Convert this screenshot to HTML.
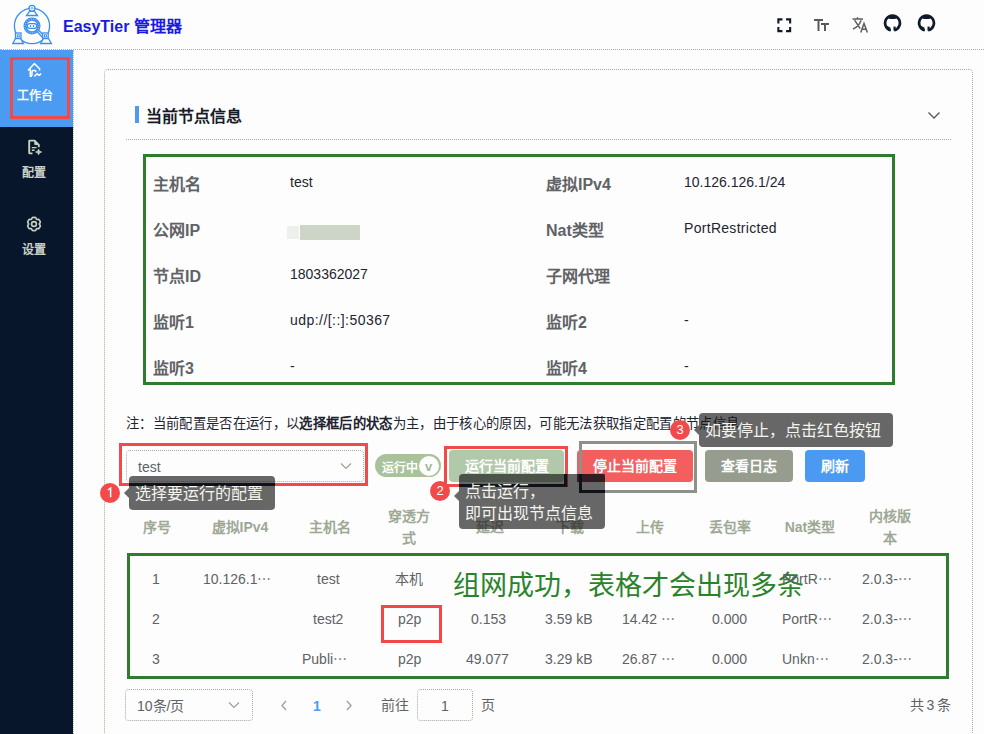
<!DOCTYPE html>
<html lang="zh-CN"><head><meta charset="utf-8">
<style>
*{margin:0;padding:0;box-sizing:border-box}
html,body{width:984px;height:734px;overflow:hidden;background:#fdfdfd;font-family:"Liberation Sans",sans-serif;color:#606266}
.a{position:absolute;white-space:nowrap}
.t14{font-size:14px;line-height:16px}
.t16{font-size:16px;line-height:18px}
.b{font-weight:bold}
.lbl{font-size:16px;line-height:20px;font-weight:bold;color:#606266}
.val{font-size:14px;line-height:16px;color:#1f2430}
.td{font-size:14px;line-height:16px;color:#606266}
.th{font-size:14px;line-height:22px;font-weight:bold;color:#9ea895;text-align:center}
.tip{position:absolute;background:rgba(18,18,18,.64);color:#f4f4ee;font-size:16px;line-height:22px;border-radius:4px;white-space:nowrap}
.tip:before{content:"";position:absolute;left:-5px;top:50%;margin-top:-5px;border-right:5px solid rgba(18,18,18,.64);border-top:5px solid transparent;border-bottom:5px solid transparent}
.t2:before{top:17px;margin-top:0}
.badge{position:absolute;width:20px;height:20px;border-radius:50%;background:#f24a4a;color:#fff;font-size:13px;line-height:20px;text-align:center}
.btn{position:absolute;height:32px;border-radius:4px;color:#fff;font-size:14px;font-weight:bold;line-height:32px;text-align:center}
.dl{position:absolute;border:1px dotted #a5ad9c}
</style></head>
<body>
<!-- header -->
<div class="a" style="left:0;top:0;width:984px;height:49px;background:#fdfdfd"></div>
<div class="a" style="left:0;top:49px;width:984px;height:0;border-top:1px dotted #aab2a2"></div>
<svg class="a" style="left:8px;top:0" width="50" height="48" viewBox="0 0 50 48" fill="none" stroke="#3c8ff0" stroke-width="1.3">
  <circle cx="24" cy="26" r="17.6"/>
  <circle cx="24" cy="26" r="6.9" stroke-width="3.2"/>
  <circle cx="24" cy="26" r="6.9" stroke="#fdfdfd" stroke-width="0.8" stroke-dasharray="0.8 1.6"/>
  <rect x="19.3" y="23.6" width="9.4" height="4.8" rx="2.4"/>
  <path d="M22.5 25v2M25.5 25v2" stroke-width="1.1"/>
  <path d="M29 31.5L35 38M30.8 30.2L36.6 36.6"/>
  <circle cx="24" cy="8.3" r="3" fill="#fdfdfd"/>
  <path d="M23 8.3L24 7.3L25 8.3L24 9.3Z" stroke-width="0.9"/>
  <path d="M18.5 15.5H29.5L26.5 11.3H21.5Z" fill="#fdfdfd"/>
  <rect x="7.5" y="33" width="5.5" height="5.5" fill="#fdfdfd"/>
  <rect x="9.3" y="34.8" width="2" height="2" stroke-width="0.9"/>
  <rect x="34.7" y="33" width="5.5" height="5.5" fill="#fdfdfd"/>
  <rect x="36.5" y="34.8" width="2" height="2" stroke-width="0.9"/>
  <path d="M4.8 43.5H15.4L12.6 38.5H7.6Z" fill="#fdfdfd"/>
  <path d="M32.6 43.5H43.4L40.4 38.5H35.4Z" fill="#fdfdfd"/>
</svg>
<div class="a b" style="left:63px;top:17px;font-size:16px;line-height:20px;color:#1a1ae4">EasyTier 管理器</div>
<!-- top right icons -->
<svg class="a" style="left:777px;top:18px" width="14.5" height="14.5" viewBox="0 0 16 16" fill="none" stroke="#101828" stroke-width="2.3">
  <path d="M1.5 6V1.5H6M10 1.5H14.5V6M14.5 10V14.5H10M6 14.5H1.5V10"/>
</svg>
<svg class="a" style="left:813px;top:18px" width="17" height="14" viewBox="0 0 17 14" fill="none" stroke="#5a5a5a" stroke-width="2">
  <path d="M1 2H10M5.5 2V13M8 6H16M12 6V13"/>
</svg>
<svg class="a" style="left:851px;top:16px" width="18" height="18" viewBox="0 0 18 18" fill="none" stroke="#5e5e5e" stroke-width="1.5">
  <path d="M1.5 3H12M6.5 1.2V3M3.6 4.2L9.2 12.6M10.2 4.2C8.5 8.5 5.5 11.5 2 13M9.8 16.4L13 7.4L16.4 16.4M11 13.2H15"/>
</svg>
<svg class="a" style="left:883px;top:13px" width="19" height="19" viewBox="0 0 19 19" fill="none" stroke="#0f1a2a" stroke-width="2.7"><path d="M11.2 17.2A7.4 7.4 0 1 0 7.8 17.2"/><path d="M6.2 4.6H12.8" stroke-width="2.8"/><path d="M11.6 13.6V17.6" stroke-width="2.2"/><path d="M4 13.6L7.4 15.4M4.6 15.6L7.4 17" stroke-width="1.2"/></svg>
<svg class="a" style="left:917px;top:13px" width="19" height="19" viewBox="0 0 19 19" fill="none" stroke="#0f1a2a" stroke-width="2.7"><path d="M11.2 17.2A7.4 7.4 0 1 0 7.8 17.2"/><path d="M6.2 4.6H12.8" stroke-width="2.8"/><path d="M11.6 13.6V17.6" stroke-width="2.2"/><path d="M4 13.6L7.4 15.4M4.6 15.6L7.4 17" stroke-width="1.2"/></svg>

<!-- sidebar -->
<div class="a" style="left:0;top:50px;width:73px;height:684px;background:#08162b"></div>
<div class="a" style="left:73px;top:50px;width:1px;height:684px;border-left:1px dotted #b8c0b0"></div>
<div class="a" style="left:0;top:50px;width:73px;height:77px;background:#4b9bf2"></div>
<div class="a" style="left:10px;top:57px;width:60px;height:62px;border:3px solid #f04a4a"></div>
<svg class="a" style="left:20px;top:56px" width="30" height="26" viewBox="0 0 30 26" fill="none" stroke="#fff" stroke-width="1.5" stroke-linejoin="round">
  <path d="M8 14.6L14.4 7.6L19.6 12.8V14.4M10.3 12.6V20.2H12M12 19.8V15.4Q12 14.6 12.9 14.6H15Q15.8 14.6 15.8 15.6V16.2M14.3 20.4L17.2 17.8L19.1 19.3L21.2 17.6"/>
</svg>
<div class="a" style="left:17px;top:89px;font-size:12px;line-height:15px;font-weight:600;color:#fafaf4">工作台</div>
<svg class="a" style="left:22px;top:134px" width="26" height="26" viewBox="0 0 26 26" fill="none" stroke="#c8d2c0" stroke-width="1.9" stroke-linejoin="round">
  <path d="M10.5 19.4H7.8Q7.2 19.4 7.2 18.8V7Q7.2 6.6 7.8 6.6H12.6L16.8 10.8V13.2"/>
  <path d="M12.8 7V10.6H16.4Z" fill="#c8d2c0" stroke-width="1"/>
  <path d="M9.8 13.6H14.6M9.8 16.2H12.6" stroke-width="1.4"/>
  <path d="M16.6 15.2Q16.9 17.7 19.6 18Q16.9 18.3 16.6 20.8Q16.3 18.3 13.6 18Q16.3 17.7 16.6 15.2Z" fill="#c8d2c0" stroke-width="0.8"/>
</svg>
<div class="a" style="left:22px;top:166px;font-size:12px;line-height:15px;font-weight:600;color:#c8d0c4">配置</div>
<svg class="a" style="left:21px;top:212px" width="26" height="26" viewBox="0 0 26 26" fill="none" stroke="#c8d2c0" stroke-width="1.6" stroke-linejoin="round">
  <path d="M13.00 5.30 L14.71 5.62 L15.60 7.50 L17.67 7.33 L18.80 8.65 L19.38 10.29 L18.20 12.00 L19.38 13.71 L18.80 15.35 L17.67 16.67 L15.60 16.50 L14.71 18.38 L13.00 18.70 L11.29 18.38 L10.40 16.50 L8.33 16.67 L7.20 15.35 L6.62 13.71 L7.80 12.00 L6.62 10.29 L7.20 8.65 L8.33 7.33 L10.40 7.50 L11.29 5.62Z"/>
  <circle cx="13" cy="12" r="2.4"/>
</svg>
<div class="a" style="left:22px;top:243px;font-size:12px;line-height:15px;font-weight:600;color:#c8d0c4">设置</div>

<!-- card -->
<div class="dl" style="left:104px;top:69px;width:869px;height:700px;border-radius:4px"></div>
<div class="a" style="left:135px;top:106px;width:4px;height:17px;background:#4b9bf2"></div>
<div class="a b" style="left:146px;top:107px;font-size:16px;line-height:20px;color:#151b28">当前节点信息</div>
<svg class="a" style="left:927px;top:110px" width="14" height="10" viewBox="0 0 14 10" fill="none" stroke="#505850" stroke-width="1.3"><path d="M1.5 2.5L7 8L12.5 2.5"/></svg>
<div class="a" style="left:126px;top:139px;width:825px;height:0;border-top:1px dotted #a5ad9c"></div>

<!-- green box info -->
<div class="a" style="left:143px;top:154px;width:752px;height:231px;border:3px solid #2e7d2e"></div>
<div class="a lbl" style="left:153px;top:175px">主机名</div>
<div class="a lbl" style="left:153px;top:221px">公网IP</div>
<div class="a lbl" style="left:153px;top:267px">节点ID</div>
<div class="a lbl" style="left:153px;top:313px">监听1</div>
<div class="a lbl" style="left:153px;top:359px">监听3</div>
<div class="a lbl" style="left:546px;top:175px">虚拟IPv4</div>
<div class="a lbl" style="left:546px;top:221px">Nat类型</div>
<div class="a lbl" style="left:546px;top:267px">子网代理</div>
<div class="a lbl" style="left:546px;top:313px">监听2</div>
<div class="a lbl" style="left:546px;top:359px">监听4</div>
<div class="a val" style="left:290px;top:174px">test</div>
<div class="a" style="left:300px;top:225px;width:60px;height:15px;background:#cdd5c8"></div>
<div class="a" style="left:287px;top:226px;width:12px;height:13px;background:#eef0eb"></div>
<div class="a val" style="left:290px;top:266px">1803362027</div>
<div class="a val" style="left:290px;top:312px;letter-spacing:0.45px">udp://[::]:50367</div>
<div class="a val" style="left:290px;top:358px">-</div>
<div class="a val" style="left:684px;top:174px">10.126.126.1/24</div>
<div class="a val" style="left:684px;top:220px;letter-spacing:0.3px">PortRestricted</div>
<div class="a val" style="left:684px;top:312px">-</div>
<div class="a val" style="left:684px;top:358px">-</div>

<!-- note -->
<div class="a" style="left:126px;top:416px;font-size:13.34px;letter-spacing:0.33px;line-height:16px;color:#1f2430">注：当前配置是否在运行，以<b>选择框后的状态</b>为主，由于核心的原因，可能无法获取指定配置的节点信息</div>

<!-- controls -->
<div class="dl" style="left:126px;top:450px;width:238px;height:32px;border-radius:4px"></div>
<div class="a t14" style="left:138px;top:459px;color:#606266">test</div>
<svg class="a" style="left:340px;top:462px" width="12" height="8" viewBox="0 0 12 8" fill="none" stroke="#9aa292" stroke-width="1.2"><path d="M1 1.5L6 6.5L11 1.5"/></svg>
<div class="a" style="left:119px;top:443px;width:249px;height:43px;border:3px solid #f04a4a"></div>

<div class="a" style="left:375px;top:454px;width:66px;height:23px;border-radius:12px;background:#a9c29b"></div>
<div class="a" style="left:382px;top:461px;font-size:12px;line-height:15px;font-weight:600;color:#fff">运行中</div>
<div class="a" style="left:419px;top:456px;width:20px;height:20px;border-radius:50%;background:#fdfdfd"></div>
<div class="a" style="left:425px;top:459px;font-size:13px;line-height:15px;color:#a4b898;font-weight:bold">v</div>

<div class="btn" style="left:449px;top:450px;width:115px;background:#b2c8aa">运行当前配置</div>
<div class="a" style="left:444px;top:446px;width:124px;height:41px;border:3px solid #f04a4a"></div>

<div class="btn" style="left:577px;top:450px;width:116px;background:#f35f5f">停止当前配置</div>
<div class="a" style="left:579px;top:441px;width:118px;height:52px;border:3px solid #8e908a"></div>

<div class="btn" style="left:705px;top:450px;width:88px;background:#969d8e">查看日志</div>
<div class="btn" style="left:805px;top:450px;width:60px;background:#4a9af2">刷新</div>

<!-- table header -->
<div class="a th" style="left:127px;top:516px;width:60px">序号</div>
<div class="a th" style="left:190px;top:516px;width:100px">虚拟IPv4</div>
<div class="a th" style="left:290px;top:516px;width:80px">主机名</div>
<div class="a th" style="left:369px;top:505px;width:80px">穿透方<br>式</div>
<div class="a th" style="left:450px;top:516px;width:80px">延迟</div>
<div class="a th" style="left:530px;top:516px;width:80px">下载</div>
<div class="a th" style="left:610px;top:516px;width:80px">上传</div>
<div class="a th" style="left:690px;top:516px;width:80px">丢包率</div>
<div class="a th" style="left:770px;top:516px;width:80px">Nat类型</div>
<div class="a th" style="left:850px;top:505px;width:80px">内核版<br>本</div>

<!-- rows -->
<div class="a" style="left:453px;top:569px;font-size:27px;line-height:34px;color:#2a832a">组网成功，表格才会出现多条</div>
<div class="a td" style="left:152px;top:571px">1</div>
<div class="a td" style="left:203px;top:571px">10.126.1⋯</div>
<div class="a td" style="left:317px;top:571px">test</div>
<div class="a td" style="left:395px;top:571px">本机</div>
<div class="a td" style="left:782px;top:571px">PortR⋯</div>
<div class="a td" style="left:862px;top:571px">2.0.3-⋯</div>

<div class="a td" style="left:152px;top:611px">2</div>
<div class="a td" style="left:313px;top:611px">test2</div>
<div class="a td" style="left:398px;top:611px">p2p</div>
<div class="a td" style="left:471px;top:611px">0.153</div>
<div class="a td" style="left:545px;top:611px">3.59 kB</div>
<div class="a td" style="left:622px;top:611px">14.42 ⋯</div>
<div class="a td" style="left:712px;top:611px">0.000</div>
<div class="a td" style="left:782px;top:611px">PortR⋯</div>
<div class="a td" style="left:862px;top:611px">2.0.3-⋯</div>

<div class="a td" style="left:152px;top:651px">3</div>
<div class="a td" style="left:302px;top:651px">Publi⋯</div>
<div class="a td" style="left:398px;top:651px">p2p</div>
<div class="a td" style="left:466px;top:651px">49.077</div>
<div class="a td" style="left:545px;top:651px">3.29 kB</div>
<div class="a td" style="left:622px;top:651px">26.87 ⋯</div>
<div class="a td" style="left:712px;top:651px">0.000</div>
<div class="a td" style="left:782px;top:651px">Unkn⋯</div>
<div class="a td" style="left:862px;top:651px">2.0.3-⋯</div>

<div class="a" style="left:381px;top:605px;width:61px;height:38px;border:3px solid #f44848"></div>
<div class="a" style="left:127px;top:553px;width:822px;height:126px;border:3px solid #2e7d2e"></div>

<!-- pagination -->
<div class="dl" style="left:125px;top:689px;width:128px;height:32px;border-radius:4px"></div>
<div class="a t14" style="left:137px;top:698px">10条/页</div>
<svg class="a" style="left:228px;top:701px" width="12" height="8" viewBox="0 0 12 8" fill="none" stroke="#9aa292" stroke-width="1.2"><path d="M1 1.5L6 6.5L11 1.5"/></svg>
<svg class="a" style="left:280px;top:700px" width="8" height="11" viewBox="0 0 8 11" fill="none" stroke="#9aa292" stroke-width="1.3"><path d="M6 1L2 5.5L6 10"/></svg>
<div class="a b" style="left:313px;top:698px;font-size:14px;line-height:16px;color:#4b9bf2">1</div>
<svg class="a" style="left:345px;top:700px" width="8" height="11" viewBox="0 0 8 11" fill="none" stroke="#9aa292" stroke-width="1.3"><path d="M2 1L6 5.5L2 10"/></svg>
<div class="a t14" style="left:381px;top:697px">前往</div>
<div class="dl" style="left:417px;top:689px;width:56px;height:32px;border-radius:4px"></div>
<div class="a t14" style="left:441px;top:698px">1</div>
<div class="a t14" style="left:481px;top:697px">页</div>
<div class="a t14" style="left:910px;top:697px;word-spacing:-1.5px">共 3 条</div>

<!-- tooltips (on top) -->
<div class="a" style="left:129px;top:483px;width:146px;height:3px;background:#0b1426"></div>
<div class="a" style="left:459px;top:484px;width:108px;height:3px;background:#0b1426"></div>
<div class="a" style="left:564px;top:474px;width:3px;height:13px;background:#0b1426"></div>
<div class="a" style="left:577px;top:474px;width:28px;height:8px;background:#6a3040"></div>
<div class="a" style="left:579px;top:474px;width:3px;height:19px;background:#0b1426"></div>
<div class="a" style="left:579px;top:490px;width:26px;height:3px;background:#0b1426"></div>

<div class="tip" style="left:129px;top:476px;width:146px;height:34px;padding:7px 0 0 6px">选择要运行的配置</div>
<div class="badge" style="left:100px;top:483px"><svg style="position:absolute;left:0;top:0" width="20" height="20" viewBox="0 0 20 20" fill="none" stroke="#fff" stroke-width="1.5"><path d="M7.8 7L10.6 5.1V14.2"/></svg></div>
<div class="tip t2" style="left:459px;top:474px;width:146px;height:55px;padding:7px 0 0 6px">点击运行，<br>即可出现节点信息</div>
<div class="badge" style="left:430px;top:481px">2</div>
<div class="tip" style="left:699px;top:413px;width:194px;height:34px;padding:7px 0 0 6px">如要停止，点击红色按钮</div>
<div class="badge" style="left:670px;top:420px">3</div>
</body></html>
